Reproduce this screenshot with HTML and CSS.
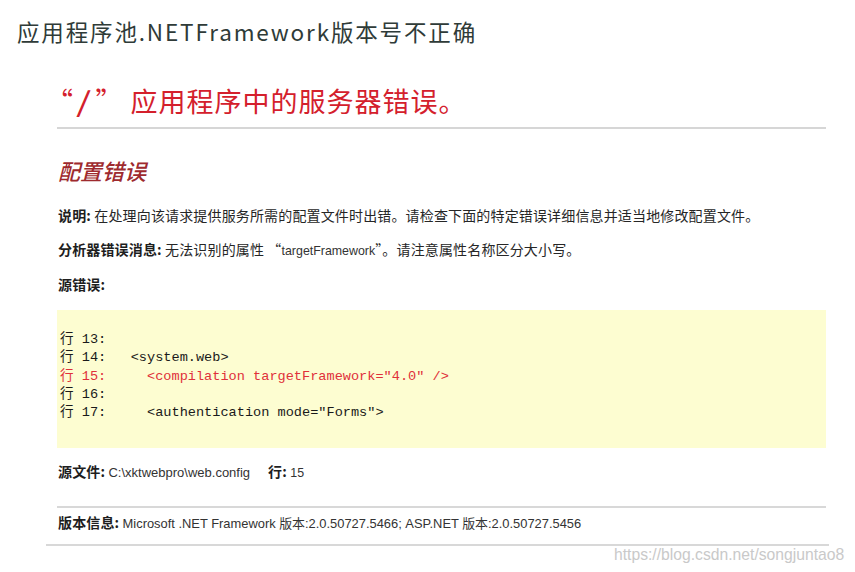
FILE: index.html
```html
<!DOCTYPE html>
<html lang="zh-CN">
<head>
<meta charset="utf-8">
<title>应用程序池.NETFramework版本号不正确</title>
<link rel="stylesheet" href="styles.css">
</head>
<body>
<h1 class="page-title">应用程序池.NETFramework版本号不正确</h1>
<main class="error-page">
  <h2 class="server-error"><span class="q-open">“</span><span class="q-slash">/</span>” 应用程序中的服务器错误。</h2>
  <h3 class="error-type">配置错误</h3>
  <p class="info first"><b>说明:</b> 在处理向该请求提供服务所需的配置文件时出错。请检查下面的特定错误详细信息并适当地修改配置文件。</p>
  <p class="info"><b>分析器错误消息:</b> 无法识别的属性 “<span class="latin">targetFramework</span>”。请注意属性名称区分大小写。</p>
  <p class="info"><b>源错误:</b></p>
  <pre class="source">行 13: 
行 14:   &lt;system.web&gt;
<span class="hl">行 15:     &lt;compilation targetFramework="4.0" /&gt;</span>
行 16: 
行 17:     &lt;authentication mode="Forms"&gt;</pre>
  <p class="info file"><b>源文件:</b> <span class="latin path">C:\xktwebpro\web.config</span><span class="gap"></span><b>行:</b> <span class="latin">15</span></p>
  <hr class="rule">
  <p class="info version"><b>版本信息:</b> <span class="latin ver">Microsoft .NET Framework 版本:2.0.50727.5466; ASP.NET 版本:2.0.50727.5456</span></p>
  <hr class="rule wide">
</main>
<div class="watermark">https://blog.csdn.net/songjuntao8</div>
</body>
</html>
```
FILE: styles.css
```css
html, body {
  margin: 0;
  background: #ffffff;
}
body {
  position: relative;
  height: 572px;
  overflow: hidden;
  font-family: "Noto Sans CJK SC", "Liberation Sans", sans-serif;
  color: #222222;
}
.page-title {
  margin: 0;
  padding: 16px 0 0 17px;
  font-size: 22.5px;
  line-height: 30px;
  font-weight: 400;
  letter-spacing: 1.85px;
  color: #2f3b38;
}
.error-page {
  margin: 38px 0 0 57px;
  width: 769px;
}
.server-error {
  margin: 0;
  padding: 0 0 9px 1px;
  border-bottom: 2px solid #d6d6d6;
  font-size: 27px;
  line-height: 34px;
  font-weight: 400;
  letter-spacing: 1px;
  color: #d4202c;
}
.q-open {
  margin-left: -12px;
  margin-right: 5px;
}
.q-slash {
  display: inline-block;
  margin-right: 5px;
  font-weight: 700;
  transform: skewX(-10deg);
}
.error-type {
  margin: 27px 0 0 1px;
  font-size: 22px;
  line-height: 28px;
  font-style: italic;
  font-weight: 500;
  color: #9e2a2e;
}
.info {
  margin: 13.5px 0 0 1px;
  font-size: 14px;
  line-height: 20px;
  letter-spacing: 0.15px;
  color: #262626;
}
.info b {
  font-weight: 700;
  color: #1e1e1e;
}
.info.first {
  margin-top: 21px;
}
.latin {
  font-family: "Liberation Sans", "Noto Sans CJK SC", sans-serif;
  font-size: 12.4px;
  letter-spacing: 0;
  color: #333333;
}
.latin.path {
  font-size: 13px;
}
.latin.ver {
  font-size: 12.9px;
}
.gap {
  display: inline-block;
  width: 18px;
}
.source {
  margin: 16px 0 0;
  padding: 21px 3px 26px;
  background: #fdfdd1;
  font-family: "Liberation Mono", "Noto Sans CJK SC", monospace;
  font-size: 13.6px;
  line-height: 18.25px;
  color: #1a1a1a;
  white-space: pre;
}
.source .hl {
  color: #e0303a;
}
.info.file {
  margin-top: 13px;
}
.rule {
  margin: 23px 0 0;
  height: 0;
  border: 0;
  border-top: 2px solid #d8d8d8;
}
.info.version {
  margin-top: 4px;
}
.rule.wide {
  margin: 10px -3px 0 -11px;
}
.watermark {
  position: absolute;
  left: 614px;
  top: 545px;
  font-family: "Liberation Sans", sans-serif;
  font-size: 15.7px;
  line-height: 20px;
  color: #c9c9c9;
}
```
